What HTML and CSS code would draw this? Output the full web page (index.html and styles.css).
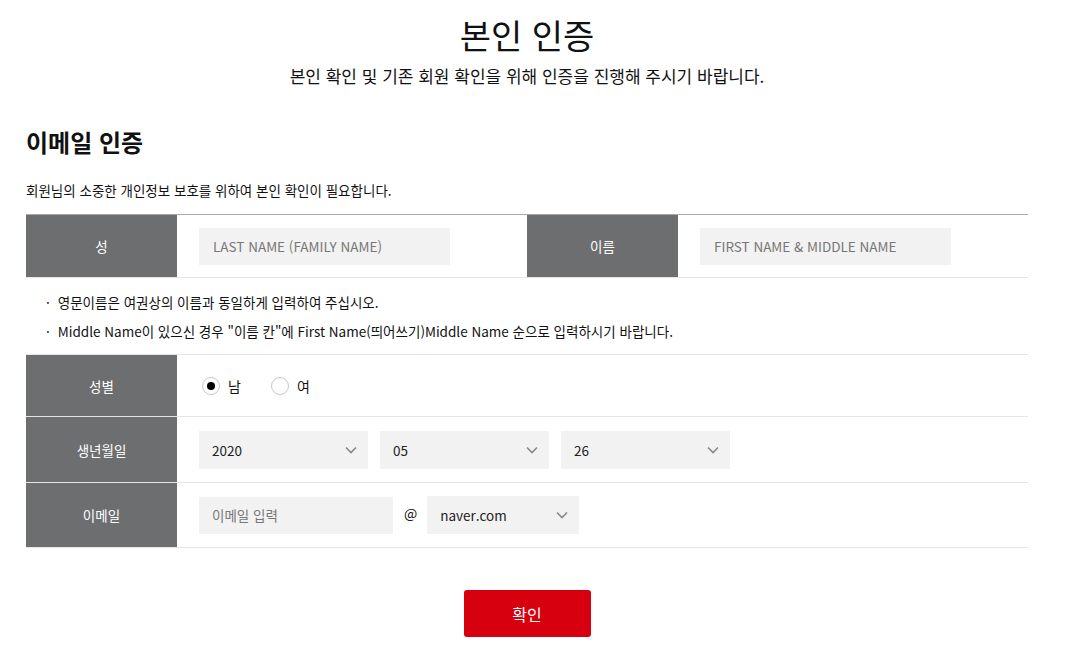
FILE: index.html
```html
<!DOCTYPE html>
<html lang="ko">
<head>
  <meta charset="UTF-8" />
  <meta name="viewport" content="width=device-width, initial-scale=1.0"/>
  <title>본인 인증</title>
  <link rel="stylesheet" href="styles.css">
</head>
<body>
  <div class="container">
    <h1 class="page-title">본인 인증</h1>
    <p class="page-desc">본인 확인 및 기존 회원 확인을 위해 인증을 진행해 주시기 바랍니다.</p>

    <h2 class="section-title">이메일 인증</h2>
    <p class="section-desc">회원님의 소중한 개인정보 보호를 위하여 본인 확인이 필요합니다.</p>

    <div class="name-table">
      <div class="label">성</div>
      <div class="value"><input type="text" class="field name-field" placeholder="LAST NAME (FAMILY NAME)" /></div>
      <div class="label">이름</div>
      <div class="value"><input type="text" class="field name-field" placeholder="FIRST NAME &amp; MIDDLE NAME" /></div>
    </div>

    <ul class="notes">
      <li>영문이름은 여권상의 이름과 동일하게 입력하여 주십시오.</li>
      <li>Middle Name이 있으신 경우 "이름 칸"에 First Name(띄어쓰기)Middle Name 순으로 입력하시기 바랍니다.</li>
    </ul>

    <div class="info-table">
      <div class="row row-gender">
        <div class="label">성별</div>
        <div class="value">
          <label class="radio checked"><span class="dot"></span>남</label>
          <label class="radio"><span class="dot"></span>여</label>
        </div>
      </div>
      <div class="row row-birth">
        <div class="label">생년월일</div>
        <div class="value">
          <div class="select-box">
            <select class="field"><option>2020</option></select>
            <svg class="chevron" width="12" height="8" viewBox="0 0 12 8"><path d="M1 1.5l5 5 5-5" fill="none" stroke="#888" stroke-width="1.6"/></svg>
          </div>
          <div class="select-box">
            <select class="field"><option>05</option></select>
            <svg class="chevron" width="12" height="8" viewBox="0 0 12 8"><path d="M1 1.5l5 5 5-5" fill="none" stroke="#888" stroke-width="1.6"/></svg>
          </div>
          <div class="select-box">
            <select class="field"><option>26</option></select>
            <svg class="chevron" width="12" height="8" viewBox="0 0 12 8"><path d="M1 1.5l5 5 5-5" fill="none" stroke="#888" stroke-width="1.6"/></svg>
          </div>
        </div>
      </div>
      <div class="row row-email">
        <div class="label">이메일</div>
        <div class="value">
          <input type="text" class="field email-field" placeholder="이메일 입력" />
          <span class="at">@</span>
          <div class="select-box domain">
            <select class="field"><option>naver.com</option></select>
            <svg class="chevron" width="12" height="8" viewBox="0 0 12 8"><path d="M1 1.5l5 5 5-5" fill="none" stroke="#888" stroke-width="1.6"/></svg>
          </div>
        </div>
      </div>
    </div>

    <div class="actions">
      <button class="btn-confirm">확인</button>
    </div>
  </div>
</body>
</html>
```

FILE: styles.css
```css
body {
  margin: 0;
  font-family: "Noto Sans CJK KR", "Noto Sans", sans-serif;
  color: #111;
  background: #fff;
}

.container {
  width: 1002px;
  margin-left: 26px;
}

.page-title {
  margin: 13px 0 0;
  font-size: 34px;
  line-height: 43px;
  font-weight: 400;
  text-align: center;
}

.page-desc {
  margin: 8px 0 0;
  font-size: 17px;
  line-height: 24px;
  text-align: center;
}

.section-title {
  margin: 37px 0 0;
  font-size: 24px;
  line-height: 34px;
  font-weight: 700;
}

.section-desc {
  margin: 21px 0 0;
  font-size: 13.5px;
  line-height: 20px;
}

.label {
  background-color: #6d6e70;
  color: #fff;
  font-size: 13.5px;
  display: flex;
  align-items: center;
  justify-content: center;
}

.value {
  display: flex;
  align-items: center;
  padding-left: 22px;
}

.field {
  height: 37px;
  border: none;
  border-radius: 0;
  background-color: #f2f2f2;
  font-family: inherit;
  font-size: 13.5px;
  color: #222;
  padding: 0 13px;
  box-sizing: border-box;
  outline: none;
}

.field::placeholder {
  color: #777;
}

.name-table {
  margin-top: 14px;
  display: grid;
  grid-template-columns: 151px 350px 151px 350px;
  height: 64px;
  border-top: 1px solid #a9a9a9;
  border-bottom: 1px solid #e6e6e6;
  box-sizing: border-box;
}

.name-field {
  width: 251px;
  padding-left: 14px;
}

.notes {
  list-style: none;
  margin: 10px 0 0;
  padding: 0 0 0 20px;
  font-size: 13.5px;
  line-height: 29px;
}

.notes li::before {
  content: "·";
  margin-right: 8px;
}

.info-table {
  margin-top: 8px;
  border-top: 1px solid #e6e6e6;
}

.row {
  display: grid;
  grid-template-columns: 151px 851px;
  border-bottom: 1px solid #e6e6e6;
}

.row .label {
  border-bottom: 1px solid #e6e6e6;
  margin-bottom: -1px;
}

.row-gender { height: 61px; }
.row-birth { height: 65px; }
.row-email { height: 64px; }

.radio {
  display: flex;
  align-items: center;
  font-size: 14px;
  margin-right: 27px;
  margin-left: 3px;
}

.radio .dot {
  width: 16px;
  height: 16px;
  border: 1px solid #c8c8c8;
  border-radius: 50%;
  margin-right: 8px;
  position: relative;
}

.radio.checked .dot::after {
  content: "";
  position: absolute;
  left: 4px;
  top: 4px;
  width: 8px;
  height: 8px;
  border-radius: 50%;
  background: #000;
}

.select-box {
  position: relative;
  width: 169px;
  margin-right: 12px;
}

.select-box select {
  width: 100%;
  height: 38px;
  appearance: none;
  -webkit-appearance: none;
  cursor: pointer;
}

.select-box .chevron {
  position: absolute;
  right: 11px;
  top: 15px;
  pointer-events: none;
}

.email-field {
  width: 194px;
}

.at {
  font-size: 14px;
  margin: 0 10px 0 11px;
  position: relative;
  top: -2px;
}

.select-box.domain {
  width: 152px;
}

.actions {
  margin-top: 42px;
  text-align: center;
}

.btn-confirm {
  width: 127px;
  height: 47px;
  background-color: #d7000f;
  color: #fff;
  border: none;
  border-radius: 3px;
  font-family: inherit;
  font-size: 16px;
  cursor: pointer;
}
```
